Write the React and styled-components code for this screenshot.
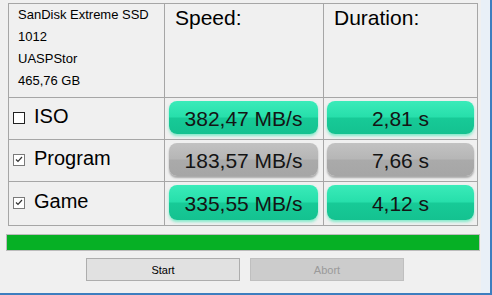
import React from 'react';
import styled, { createGlobalStyle } from 'styled-components';

const Global = createGlobalStyle`
  html, body {
    margin: 0;
    padding: 0;
    background: #f0f0f0;
  }
  * {
    box-sizing: border-box;
  }
`;

const Shell = styled.div`
  width: 492px;
  height: 295px;
  display: flex;
  background: #f0f0f0;
  border-right: 2px solid #3d7ebf;
  border-bottom: 2px solid #3d7ebf;
  font-family: 'Liberation Sans', Arial, sans-serif;
  color: #000;
  overflow: hidden;
`;

const Main = styled.div`
  width: 481px;
  display: flex;
  flex-direction: column;
  padding-top: 3px;
`;

const Edge = styled.div`
  flex: 1;
  background: #e9f0f7;
`;

const Table = styled.div`
  margin-left: 8px;
  width: 470px;
  display: grid;
  grid-template-columns: 155px 158px 153px;
  grid-template-rows: 93px 41px 41px 43px;
  gap: 1px;
  background: #a6a6a6;
  border: 1px solid #a6a6a6;
`;

const Cell = styled.div`
  background: #f0f0f0;
  display: flex;
  min-width: 0;
`;

const Info = styled(Cell)`
  flex-direction: column;
  padding-left: 9px;
  font-size: 13px;
  line-height: 22px;
`;

const Heading = styled(Cell)`
  padding: 2px 0 0 10px;
  font-size: 21px;
  line-height: 24px;
`;

const Label = styled(Cell)`
  align-items: center;
  padding: 0 0 4px 4px;
  font-size: 20px;
  gap: 9px;
`;

const Box = styled.span`
  width: 12px;
  height: 12px;
  display: flex;
  align-items: center;
  justify-content: center;
  background: #fff;
  border: 1px solid ${(p) => (p.checked ? '#7a7a7a' : '#222')};
  margin-top: 2px;
`;

const ValueCell = styled(Cell)`
  padding: 3px ${(p) => (p.wide ? '5px' : '3px')} 5px ${(p) => (p.wide ? '4px' : '3px')};
`;

const Pill = styled.div`
  flex: 1;
  display: flex;
  align-items: center;
  justify-content: center;
  padding-top: 3px;
  border-radius: 8px;
  font-size: 21px;
  color: #141414;
  background: ${(p) =>
    p.muted
      ? 'linear-gradient(to bottom, #c2c2c2 0%, #b6b6b6 48%, #aaaaaa 52%, #a6a6a6 100%)'
      : 'linear-gradient(to bottom, #3aebb9 0%, #27dfab 48%, #17ca97 52%, #14c290 100%)'};
  box-shadow: ${(p) =>
    p.muted
      ? '0 2px 2px rgba(0, 0, 0, 0.3)'
      : '0 2px 3px rgba(40, 230, 170, 0.55)'};
`;

const Progress = styled.div`
  margin: 8px 0 0 6px;
  width: 474px;
  height: 17px;
  border: 1px solid #bcbcbc;
  background: #e6e6e6;
`;

const Fill = styled.div`
  height: 100%;
  background: #06b025;
`;

const Buttons = styled.div`
  display: flex;
  gap: 10px;
  margin-top: 7px;
  padding-left: 86px;
`;

const Button = styled.button`
  width: 154px;
  height: 23px;
  padding: 0;
  font-family: 'Liberation Sans', Arial, sans-serif;
  font-size: 11px;
  border: 1px solid ${(p) => (p.disabled ? '#bfbfbf' : '#adadad')};
  background: ${(p) => (p.disabled ? '#cccccc' : '#e1e1e1')};
  color: ${(p) => (p.disabled ? '#9a9a9a' : '#000')};
`;

const Check = ({ checked }) => (
  <Box checked={checked}>
    {checked && (
      <svg width="8" height="7" viewBox="0 0 8 7">
        <path d="M1 3.5 L3 5.5 L7 1" fill="none" stroke="#333" strokeWidth="1.2" />
      </svg>
    )}
  </Box>
);

const rows = [
  { name: 'ISO', checked: false, speed: '382,47 MB/s', time: '2,81 s', muted: false },
  { name: 'Program', checked: true, speed: '183,57 MB/s', time: '7,66 s', muted: true },
  { name: 'Game', checked: true, speed: '335,55 MB/s', time: '4,12 s', muted: false },
];

export default function App() {
  return (
    <>
      <Global />
      <Shell>
        <Main>
          <Table>
            <Info>
              <span>SanDisk Extreme SSD</span>
              <span>1012</span>
              <span>UASPStor</span>
              <span>465,76 GB</span>
            </Info>
            <Heading>Speed:</Heading>
            <Heading>Duration:</Heading>
            {rows.map((r) => (
              <React.Fragment key={r.name}>
                <Label>
                  <Check checked={r.checked} />
                  {r.name}
                </Label>
                <ValueCell wide>
                  <Pill muted={r.muted}>{r.speed}</Pill>
                </ValueCell>
                <ValueCell>
                  <Pill muted={r.muted}>{r.time}</Pill>
                </ValueCell>
              </React.Fragment>
            ))}
          </Table>
          <Progress>
            <Fill style={{ width: '100%' }} />
          </Progress>
          <Buttons>
            <Button>Start</Button>
            <Button disabled>Abort</Button>
          </Buttons>
        </Main>
        <Edge />
      </Shell>
    </>
  );
}
